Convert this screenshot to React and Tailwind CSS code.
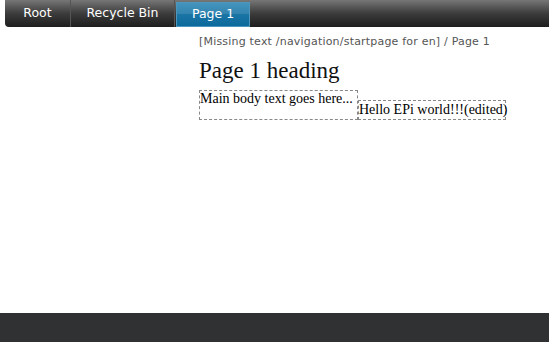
import React from 'react'

function Tab({ label, active, width }) {
  if (active) {
    return (
      <div className="relative h-[25px] mt-px w-[74px] flex items-center justify-center border border-[#4d97bd] bg-gradient-to-b from-[#2f88b6] via-[#1a75a5] via-50% to-[#0b6a9c] text-white">
        <div className="absolute inset-x-0 top-0 h-1/2 bg-white/10" />
        <span className="relative">{label}</span>
      </div>
    )
  }
  return <div className={`${width} text-center text-white`}>{label}</div>
}

export default function App() {
  return (
    <div className="w-[549px] h-[342px] bg-white flex flex-col font-['DejaVu_Sans',sans-serif]">
      {/* Top nav */}
      <div className="pl-[5px]">
        <div className="h-[27px] rounded-bl-[4px] bg-gradient-to-b from-[#777] via-[#3c3c3c] via-50% to-[#1e1e1e] flex items-center text-[12.5px]">
          <Tab label="Root" width="w-[65px]" />
          <div className="w-px h-[27px] bg-[#555]" />
          <Tab label="Recycle Bin" width="w-[103px]" />
          <div className="w-px h-[27px] bg-[#555]" />
          <div className="w-[1px]" />
          <Tab label="Page 1" active />
        </div>
      </div>

      {/* Content */}
      <div className="flex-1 pl-[199px] pt-[8px]">
        <div className="text-[11px] leading-[13px] text-[#555] tracking-[0.2px]">
          [Missing text /navigation/startpage for en] / Page 1
        </div>
        <h1 className="mt-[10px] text-[23px] leading-[26px] text-[#111] font-['Liberation_Serif',serif]">
          Page 1 heading
        </h1>
        <div className="mt-[6px] flex items-end font-['Liberation_Serif',serif] text-[14px] text-black leading-[16px]">
          <div className="border border-dashed border-[#888] h-[30px] w-[159px]">
            Main body text goes here...
          </div>
          <div className="border border-dashed border-[#888] h-[20px] w-[148px] pt-[1px] whitespace-nowrap">
            Hello EPi world!!!(edited)
          </div>
        </div>
      </div>

      {/* Footer */}
      <div className="h-[29px] bg-[#303132]" />
    </div>
  )
}
